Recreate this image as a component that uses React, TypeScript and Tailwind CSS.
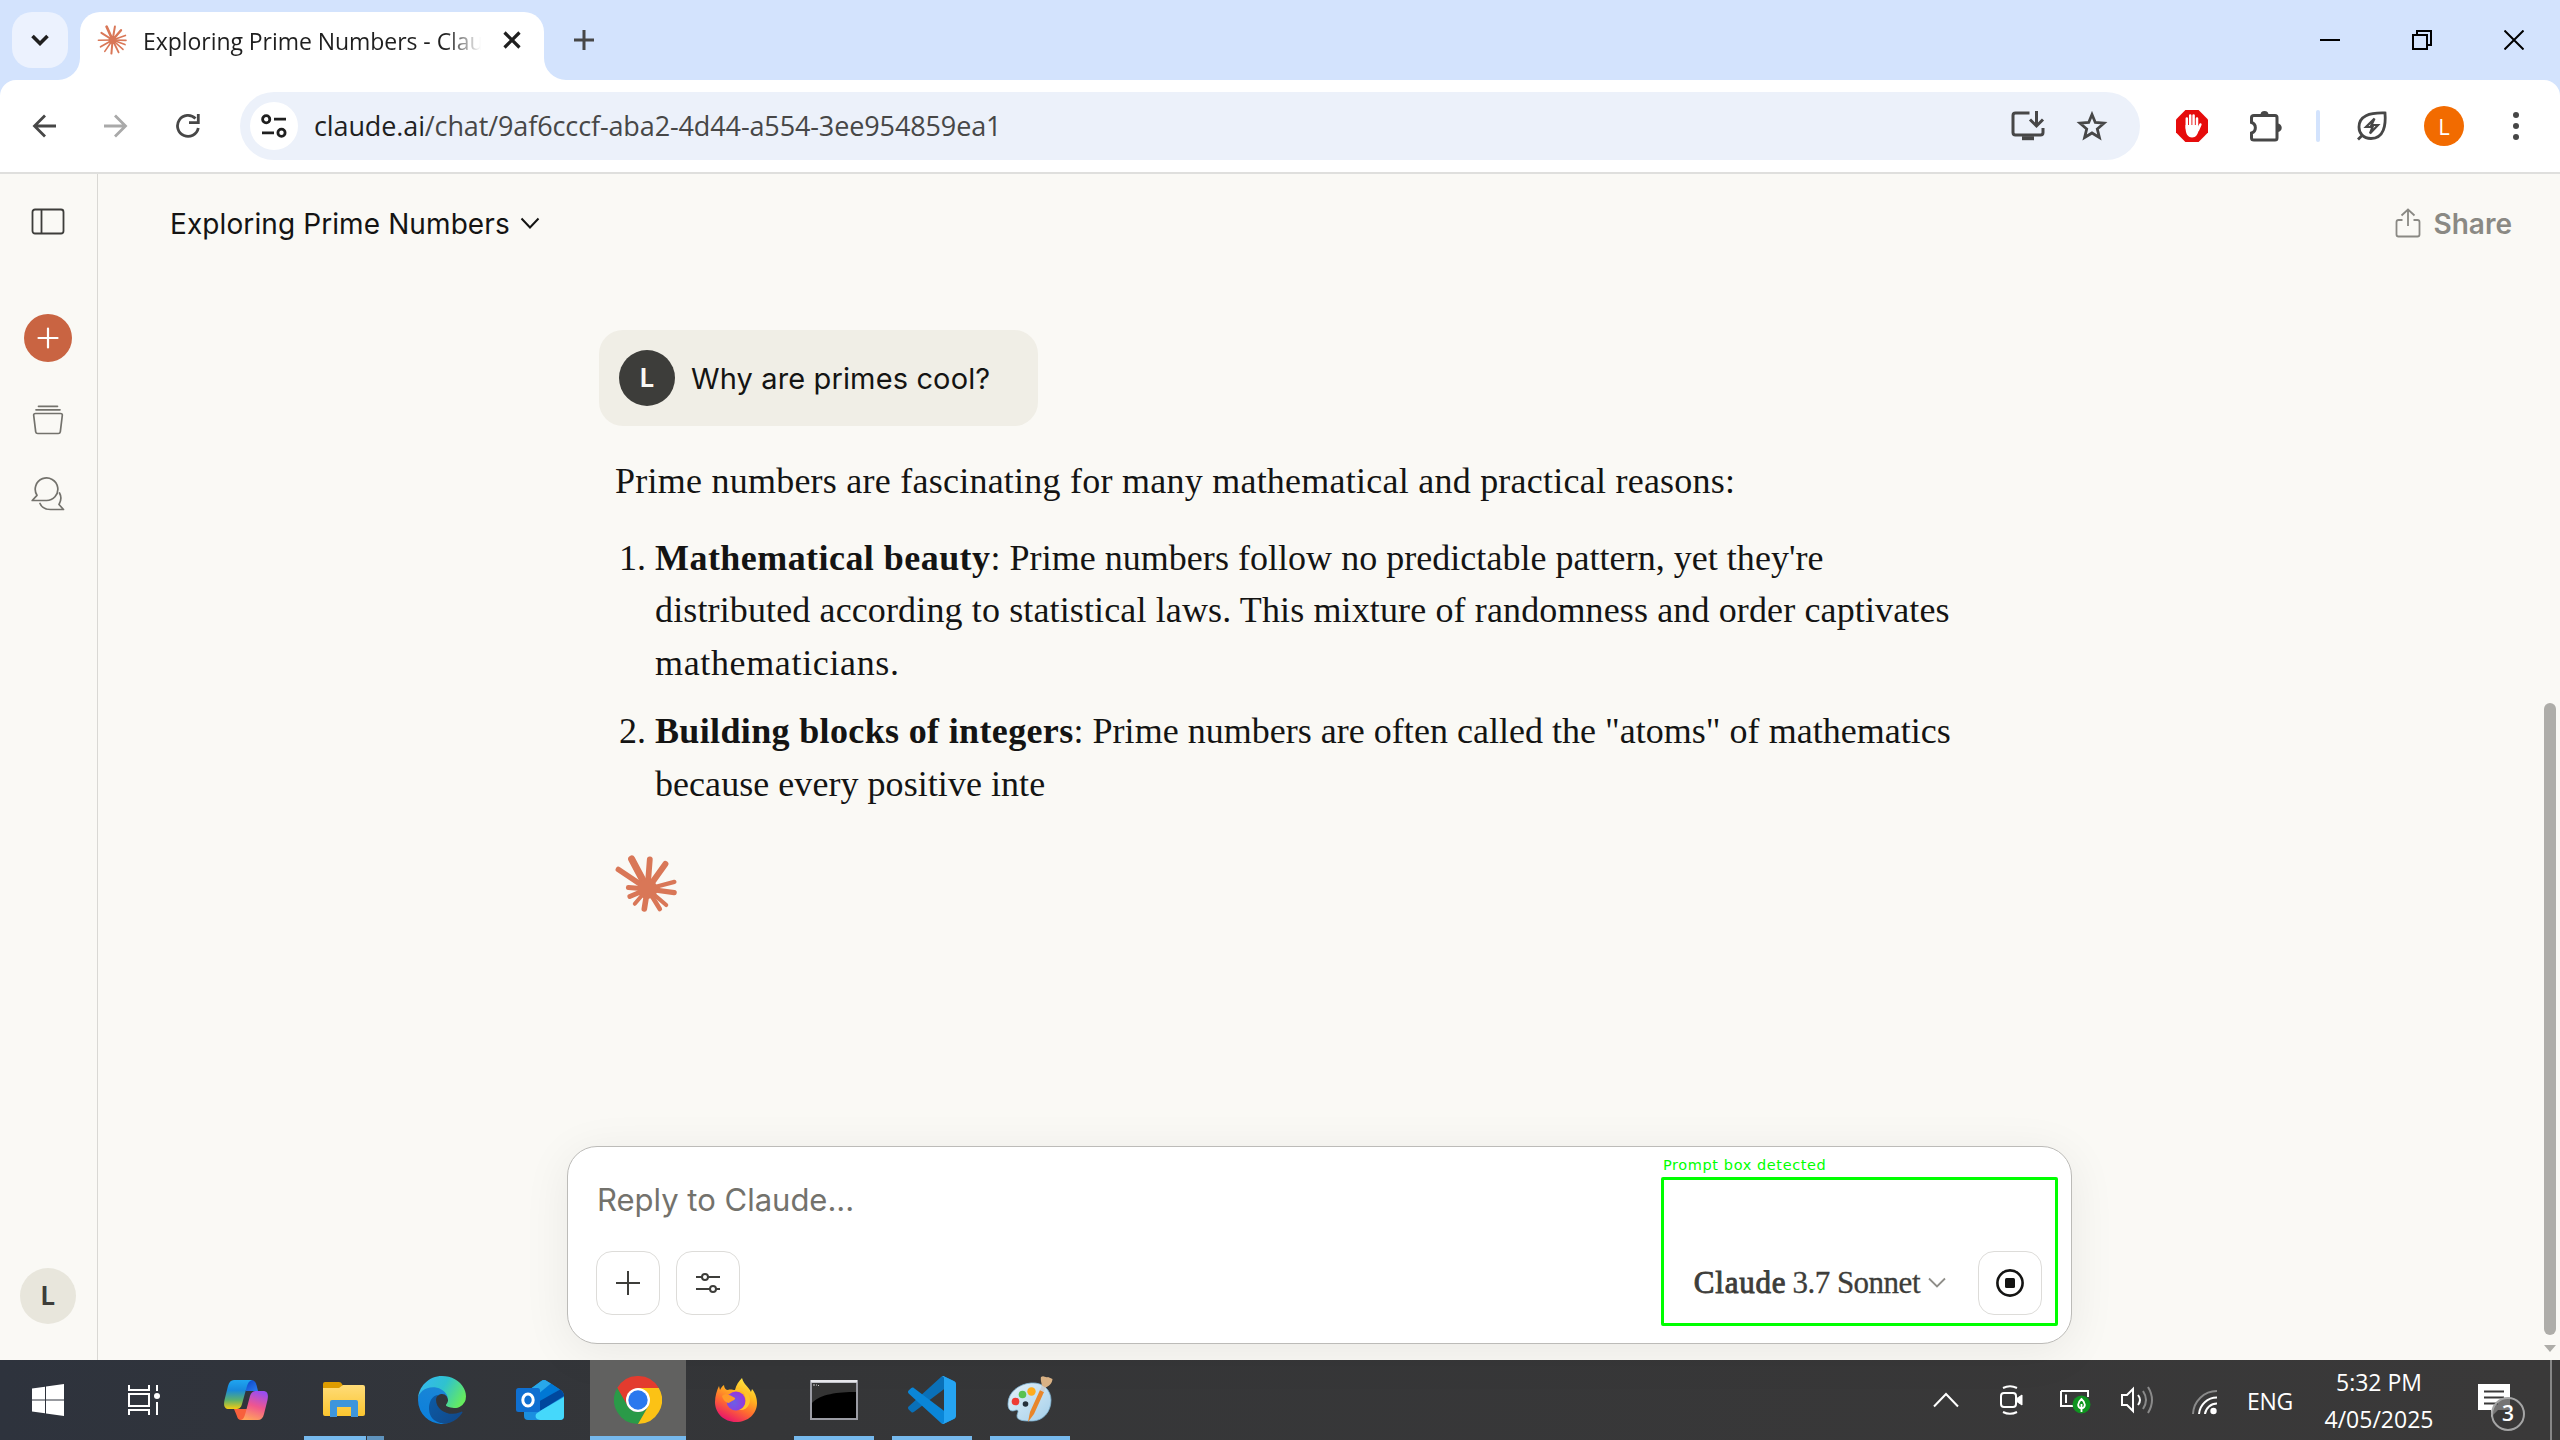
import type { ReactNode } from "react";

type Ray = [number, number, number];

function Burst({ w, h, cx, cy, core, rays }: { w: number; h: number; cx: number; cy: number; core: number; rays: Ray[] }) {
  return (
    <svg width={w} height={h} viewBox={`0 0 ${w} ${h}`} className="shrink-0" fill="#d97757" stroke="#d97757" strokeLinecap="round">
      {rays.map(([x, y, t], i) => (
        <line key={i} x1={cx} y1={cy} x2={x} y2={y} strokeWidth={t} />
      ))}
      <circle cx={cx} cy={cy} r={core} stroke="none" />
    </svg>
  );
}

const FAVICON_RAYS: Ray[] = [
  [9.6, 1.6, 2.6], [17.9, 1.6, 2], [24, 5.2, 2.4], [28.4, 10.4, 1.6], [29, 15.4, 1.6], [28, 19.6, 1.6], [26, 24.4, 1.6],
  [21.6, 27.4, 1.8], [14.4, 28.6, 2], [7.8, 26.4, 1.6], [3.6, 21.8, 1.8], [1.4, 15.2, 1.6], [4.4, 7.8, 2],
];

const LOGO_RAYS: Ray[] = [
  [3.4, 14.5, 5.6], [16.6, 4, 7], [34.8, 4.4, 5.8], [50.4, 9, 6], [59.4, 26.9, 4.2], [59.2, 37.6, 5.2], [51.2, 50, 4.2],
  [44.8, 54, 4.6], [29.3, 54, 5.6], [19.8, 48.8, 4], [14.8, 41.5, 4.8], [13.4, 32.4, 5],
];

function Stroke({ w, h, color, sw = 2, children, cap = "butt", className = "" }: { w: number; h: number; color: string; sw?: number; children: ReactNode; cap?: "butt" | "round"; className?: string }) {
  return (
    <svg width={w} height={h} viewBox={`0 0 ${w} ${h}`} className={`shrink-0 ${className}`} fill="none" stroke={color} strokeWidth={sw} strokeLinecap={cap} strokeLinejoin={cap === "round" ? "round" : "miter"}>
      {children}
    </svg>
  );
}

function TabStrip() {
  return (
    <div className="flex h-20 bg-[#d3e3fd]">
      <div className="mt-3 ml-3 flex size-14 items-center justify-center rounded-[20px] bg-[#ecf2fe]">
        <Stroke w={18} h={12} color="#1f1f1f" sw={3.6}><path d="M1.5 2 L9 9.5 L16.5 2" /></Stroke>
      </div>
      <div className="relative mt-3 ml-3 flex h-[68px] w-[464px] items-start rounded-t-[20px] bg-white">
        <svg width="22" height="22" className="absolute bottom-0 -left-[22px]"><path d="M22 0 V22 H0 A22 22 0 0 0 22 0Z" fill="#fff" /></svg>
        <svg width="22" height="22" className="absolute -right-[22px] bottom-0"><path d="M0 0 V22 H22 A22 22 0 0 1 0 0Z" fill="#fff" /></svg>
        <div className="mt-[13px] ml-[17px]"><Burst w={30} h={30} cx={15.6} cy={15} core={4} rays={FAVICON_RAYS} /></div>
        <div className="mt-[9px] ml-[16px] w-[338px] mask-r-from-[302px] mask-r-to-[338px]">
          <span className="font-['Open_Sans'] text-[23px] leading-[40px] tracking-[-0.05px] whitespace-nowrap text-[#1f1f1f]">Exploring Prime Numbers - Clau</span>
        </div>
        <Stroke w={18} h={18} color="#1f1f1f" sw={3.2} className="mt-[19px] ml-[22px]"><path d="M1.5 1.5 L16.5 16.5 M16.5 1.5 L1.5 16.5" /></Stroke>
      </div>
      <Stroke w={22} h={22} color="#474747" sw={3} className="mt-[29px] ml-[29px]"><path d="M11 1 V21 M1 11 H21" /></Stroke>
      <div className="mr-9 ml-auto flex items-center gap-[72px]">
        <Stroke w={20} h={20} color="#000"><path d="M0 10 H20" /></Stroke>
        <Stroke w={20} h={20} color="#000"><path d="M1 5 H15 V19 H1Z M5 5 V1 H19 V15 H15" /></Stroke>
        <Stroke w={20} h={20} color="#000"><path d="M0.5 0.5 L19.5 19.5 M19.5 0.5 L0.5 19.5" /></Stroke>
      </div>
    </div>
  );
}

function Toolbar() {
  return (
    <div className="bg-[#d3e3fd]">
      <div className="flex h-[94px] items-start rounded-t-[16px] border-b-2 border-[#dfdfdd] bg-white">
        <div className="flex h-[92px] flex-1 items-center">
          <Stroke w={24} h={24} color="#474747" sw={2.8} className="ml-8"><path d="M24 12 H3 M13 1.5 L2.5 12 L13 22.5" /></Stroke>
          <Stroke w={24} h={24} color="#a9a9a9" sw={2.8} className="ml-12"><path d="M0 12 H21 M11 1.5 L21.5 12 L11 22.5" /></Stroke>
          <Stroke w={26} h={26} color="#474747" sw={2.8} className="ml-[47px]"><path d="M23.3 15 A10.5 10.5 0 1 1 20.5 5.5 M23.3 1 V9.6 H14" /></Stroke>
          <div className="ml-[39px] flex h-[68px] w-[1900px] items-center rounded-full bg-[#ecf1fa]">
            <div className="ml-[10px] flex size-12 items-center justify-center rounded-full bg-white">
              <Stroke w={26} h={24} color="#1f1f1f" sw={2.8}><circle cx="5.2" cy="5.2" r="3.6" /><path d="M13 5.2 H25 M1 18.8 H13" /><circle cx="20.5" cy="18.8" r="3.6" /></Stroke>
            </div>
            <span className="ml-4 font-['Open_Sans'] text-[27px] leading-[40px] tracking-[-0.12px] whitespace-nowrap text-[#474747]"><span className="text-[#1f1f1f]">claude.ai</span>/chat/9af6cccf-aba2-4d44-a554-3ee954859ea1</span>
            <Stroke w={34} h={30} color="#474747" sw={3} className="mr-[31px] ml-auto"><path d="M18.500 2 H4.500 Q2 2 2 4.500 V21.500 Q2 24 4.500 24 H29.500 Q32 24 32 21.500 V17" /><path d="M25.500 0 V14 M19 8.500 L25.500 15 L32 8.500" /><path d="M11 27.200 H23" strokeWidth="4" /></Stroke>
            <Stroke w={32} h={30} color="#474747" sw={2.8} className="mr-8"><path d="M16 3.500 L19.300 11.500 L28 12.200 L21.300 18 L23.400 26.500 L16 22 L8.600 26.500 L10.700 18 L4 12.200 L12.700 11.500Z" /></Stroke>
          </div>
          <svg width="32" height="32" viewBox="0 0 32 32" className="ml-9 shrink-0">
            <path d="M9.400 0 H22.600 L32 9.400 V22.600 L22.600 32 H9.400 L0 22.600 V9.400Z" fill="#e60c0c" />
            <g stroke="#fff" strokeWidth="2.500" strokeLinecap="round" fill="none"><path d="M10.800 18 V8.500 M14.200 16 V5.500 M17.600 16 V5.500 M21 17 V8.500" /><path d="M22 20 L24.400 14.500" /></g>
            <path d="M9.550 15 H22.200 L23 19 C22 24 20 27.500 16 27.500 C11.500 27.500 9.550 23 9.550 18Z" fill="#fff" />
          </svg>
          <Stroke w={34} h={34} color="#474747" sw={3} className="ml-[41px]"><path d="M5 6.500 H26 Q28 6.500 28 8.500 V29 Q28 31 26 31 H5 Q2.500 31 2.500 29 V24 A5.500 5.500 0 0 0 2.500 13.500 V8.500 Q2.500 6.500 5 6.500Z" /><path d="M11.500 6 A4 4 0 0 1 19.500 6Z M28.500 14.500 A4 4 0 0 1 28.500 23Z" fill="#474747" stroke="none" /></Stroke>
          <div className="ml-[33px] h-8 w-1 rounded-full bg-[#d3e3fd]" />
          <Stroke w={32} h={32} color="#474747" sw={2.800} className="ml-[36px]"><path d="M29 3 C30 15 28 28.500 15 28.500 C7 28.500 3 23 3 17 C3 6 13 2.500 29 3Z M2 29.500 L7 24.500" /><path d="M18.500 8.500 L10 17 H16.500 L14 23.500 L22 15 H15.500Z" strokeWidth="2.200" /></Stroke>
          <div className="ml-[36px] flex size-10 items-center justify-center rounded-full bg-[#f26b00] font-['Open_Sans'] text-[22px] text-white">L</div>
          <svg width="6" height="30" className="ml-[49px] shrink-0" fill="#474747"><circle cx="3" cy="4" r="3" /><circle cx="3" cy="15" r="3" /><circle cx="3" cy="26" r="3" /></svg>
        </div>
      </div>
    </div>
  );
}

function Sidebar() {
  return (
    <div className="flex w-[98px] shrink-0 flex-col items-center border-r border-[#d9d8d4] pr-[1px]">
      <Stroke w={34} h={27} color="#3d3d3a" sw={1.800} className="mt-[34px]"><rect x="1.500" y="1.500" width="31" height="24" rx="2.500" /><path d="M10.500 1.500 V25.500" /></Stroke>
      <div className="mt-[79px] flex size-12 items-center justify-center rounded-full bg-[#c96442]">
        <Stroke w={22} h={22} color="#fff" sw={2.200} cap="round"><path d="M11 1.500 V20.500 M1.500 11 H20.500" /></Stroke>
      </div>
      <Stroke w={32} h={32} color="#73726c" sw={1.700} cap="round" className="mt-[42px]"><path d="M6.500 2.300 H25.500 M4 5.800 H28" /><path d="M3.500 9.500 H28.500 Q30.600 9.500 30.300 11.500 L28.300 27.800 Q28 29.500 26.300 29.500 H5.700 Q4 29.500 3.700 27.800 L1.700 11.500 Q1.400 9.500 3.500 9.500Z" /></Stroke>
      <Stroke w={34} h={36} color="#73726c" sw={1.700} cap="round" className="mt-[40px]"><path d="M1.200 24.500 L6 19.300 A11.300 11.300 0 1 1 15 24.500Z" /><path d="M28.500 17 C30.500 20.500 30 25 28 28.500 L32.500 33.500 H19.500 C14.500 33.500 10.500 31 9 27.500" /></Stroke>
      <div className="mt-auto mb-9 flex size-14 items-center justify-center rounded-full bg-[#e8e6dc] pt-[2px] font-['Inter'] text-[25px] font-bold text-[#3d3d3a]">L</div>
    </div>
  );
}

function Composer() {
  return (
    <div className="relative mb-4 flex h-[198px] w-[1505px] flex-col rounded-[30px] border border-[#bcbbb8] bg-white pr-[29px] pl-7 shadow-[0_8px_48px_rgba(0,0,0,0.07)]">
      <span className="mt-[29px] ml-[1px] font-['Inter'] text-[31px] leading-[48px] text-[#73726c]">Reply to Claude...</span>
      <div className="mt-[27px] flex items-center">
        <div className="flex size-16 items-center justify-center rounded-2xl border-[1.500px] border-[#dddcd9]">
          <Stroke w={24} h={24} color="#3d3d3a"><path d="M12 0 V24 M0 12 H24" /></Stroke>
        </div>
        <div className="ml-4 flex size-16 items-center justify-center rounded-2xl border-[1.500px] border-[#dddcd9]">
          <Stroke w={24} h={20} color="#3d3d3a"><path d="M0 4 H6 M12 4 H24 M0 16 H14 M20 16 H24" /><circle cx="9" cy="4" r="3" /><circle cx="17" cy="16" r="3" /></Stroke>
        </div>
        <div className="mr-8 ml-auto flex items-center font-['Liberation_Serif'] text-[31px] leading-[40px] text-[#3d3d3a]">
          <span className="tracking-[0.8px] [-webkit-text-stroke:0.9px_#3d3d3a]">Claude</span>
          <span className="ml-[6px] tracking-[-0.5px] [-webkit-text-stroke:0.300px_#3d3d3a]">3.7 Sonnet</span>
          <Stroke w={18} h={12} color="#8f8e89" sw={1.800} className="ml-2"><path d="M1 1.500 L9 9.500 L17 1.500" /></Stroke>
        </div>
        <div className="flex size-16 items-center justify-center rounded-2xl border-[1.500px] border-[#dddcd9]">
          <svg width="28" height="28"><circle cx="14" cy="14" r="12.600" fill="none" stroke="#141413" strokeWidth="2.600" /><rect x="9" y="9" width="10" height="10" rx="1.500" fill="#141413" /></svg>
        </div>
      </div>
      <div className="absolute top-[7px] left-[1093px] flex flex-col">
        <span className="ml-[2px] self-start font-['DejaVu_Sans'] text-[14.500px] leading-[23px] font-normal tracking-[0.600px] text-[#00ff00]">Prompt box detected</span>
        <div className="h-[149px] w-[397px] rounded-[2px] border-3 border-[#00ff00]" />
      </div>
    </div>
  );
}

function ChatPage() {
  return (
    <div className="flex h-[1186px] bg-[#faf9f5]">
      <Sidebar />
      <div className="flex flex-1 flex-col">
        <div className="flex h-[98px] items-center pt-[2px] pr-8 pl-[72px] font-['Inter'] text-[28px] leading-[40px]">
          <span className="tracking-[0.1px] text-[#141413]">Exploring Prime Numbers</span>
          <Stroke w={20} h={14} color="#141413" className="ml-[10px]"><path d="M1.500 1.500 L10 10.500 L18.500 1.500" /></Stroke>
          <Stroke w={26} h={30} color="#8a8984" sw={1.800} className="mb-[2px] ml-auto"><path d="M7.500 12 H3.500 Q1.500 12 1.500 14 V26.500 Q1.500 28.500 3.500 28.500 H22.500 Q24.500 28.500 24.500 26.500 V14 Q24.500 12 22.500 12 H18.500 M13 18 V2 M6.500 7.500 L13 1.500 L19.500 7.500" /></Stroke>
          <span className="ml-[13px] font-semibold text-[#8a8984]">Share</span>
        </div>
        <div className="flex flex-1 flex-col pl-[501px]">
          <div className="mt-[58px] flex h-24 w-[439px] items-center rounded-[24px] bg-[#f0eee6]">
            <div className="ml-5 flex size-14 items-center justify-center rounded-full bg-[#3d3d3a] pt-[2px] font-['Inter'] text-[25px] font-bold text-[#faf9f5]">L</div>
            <span className="mt-[2px] ml-[16px] font-['Inter'] text-[29px] leading-[40px] tracking-[0.130px] text-[#141413]">Why are primes cool?</span>
          </div>
          <div className="pl-[16px] font-['Liberation_Serif'] text-[36px] leading-[52.500px] whitespace-nowrap text-[#141413]">
            <p className="mt-[29px]"><span className="tracking-[0.240px]">Prime numbers are fascinating for many mathematical and practical reasons:</span></p>
            <div className="mt-[24px] flex">
              <span className="ml-[4px] w-[36px]">1.</span>
              <p>
                <span className="font-bold tracking-[0.450px]">Mathematical beauty</span><span className="tracking-[0.030px]">: Prime numbers follow no predictable pattern, yet they're</span><br />
                <span className="tracking-[0.130px]">distributed according to statistical laws. This mixture of randomness and order captivates</span><br />
                <span className="tracking-[0.650px]">mathematicians.</span>
              </p>
            </div>
            <div className="mt-[16px] flex">
              <span className="ml-[4px] w-[36px]">2.</span>
              <p>
                <span className="font-bold tracking-[0.350px]">Building blocks of integers</span><span className="tracking-[0.020px]">: Prime numbers are often called the "atoms" of mathematics</span><br />
                <span className="tracking-[0.050px]">because every positive inte</span>
              </p>
            </div>
          </div>
          <div className="mt-[45px] ml-4"><Burst w={64} h={58} cx={32.500} cy={34} core={10} rays={LOGO_RAYS} /></div>
        </div>
        <div className="pl-[469px]"><Composer /></div>
      </div>
      <div className="flex w-4 shrink-0 flex-col items-start">
        <div className="mt-[529px] h-[632px] w-3 rounded-full bg-[#aeada9]" />
        <svg width="12" height="8" className="mt-[10px]"><path d="M0 0 H12 L6 7Z" fill="#aeada9" /></svg>
      </div>
    </div>
  );
}

function WindowsIcon() {
  return <svg width="32" height="32" fill="#fff"><path d="M0 4.600 L13 2.700 V15.500 H0Z M14 2.500 L32 0 V15.500 H14Z M0 16.500 H13 V29.300 L0 27.400Z M14 16.500 H32 V32 L14 29.500Z" /></svg>;
}

function TaskViewIcon() {
  return <Stroke w={32} h={30} color="#fff"><path d="M1 0 V5 H21 V0 M1 30 V25 H21 V30 M1 9 H21 V21 H1Z M29 0 V6 M29 17 V30" /><circle cx="29" cy="11" r="3" fill="#fff" stroke="none" /></Stroke>;
}

function CopilotIcon() {
  return (
    <svg width="44" height="40" viewBox="0 0 44 40">
      <defs>
        <linearGradient id="cpA" x1="0" y1="0" x2="0" y2="1"><stop offset="0" stopColor="#1fa5f0" /><stop offset=".35" stopColor="#1889dc" /><stop offset=".7" stopColor="#5fb16a" /><stop offset="1" stopColor="#f5cb10" /></linearGradient>
        <linearGradient id="cpB" x1=".6" y1="0" x2=".3" y2="1"><stop offset="0" stopColor="#9a4df0" /><stop offset=".5" stopColor="#f0568e" /><stop offset="1" stopColor="#ffa35c" /></linearGradient>
        <linearGradient id="cpC" x1="0" y1="0" x2="1" y2="1"><stop offset="0" stopColor="#0a3fc4" /><stop offset="1" stopColor="#2b7df0" /></linearGradient>
      </defs>
      <path d="M20 0 H27 C31 0 32 3 33 7 L34 11 H22Z" fill="url(#cpC)" />
      <path d="M10 29 H24 L21 40 H18 C14 40 13.500 38 12.500 35Z" fill="#f8603c" />
      <path d="M10 0 H28 C25 1 24 3 23 6 L18 24 C17 28 15 29 12 29 H5 C0 29 -.5 25 .5 20 L4 6 C5 2 7 0 10 0Z" fill="url(#cpA)" />
      <path d="M34 40 H17 C20 39 20.500 36 21.500 33 L26 16 C27 12.500 29 11 32 11 H39 C44 11 44.500 15 43.500 20 L40 34 C39 38 37 40 34 40Z" fill="url(#cpB)" />
    </svg>
  );
}

function FolderIcon() {
  return (
    <svg width="42" height="36" viewBox="0 0 42 36">
      <defs><linearGradient id="fo" x1="0" y1="0" x2="0" y2="1"><stop offset="0" stopColor="#ffdc78" /><stop offset="1" stopColor="#fbc52f" /></linearGradient></defs>
      <path d="M0 2 Q0 0 2 0 H16 Q18 0 19 2 L21 6 H0Z" fill="#dd9c00" />
      <path d="M0 6 H16 L20 3 H40 Q42 3 42 5 V32 Q42 34 40 34 H2 Q0 34 0 32Z" fill="url(#fo)" />
      <path d="M7 35 V20 Q7 18 9 18 H33 Q35 18 35 20 V35 H28 V25 H14 V35Z" fill="#3d95dc" />
    </svg>
  );
}

function EdgeIcon() {
  return (
    <svg width="48" height="48" viewBox="0 0 256 256">
      <defs>
        <linearGradient id="e1" x1=".2" y1="0" x2="1" y2=".6"><stop offset="0" stopColor="#0c59a4" /><stop offset="1" stopColor="#114a8b" /></linearGradient>
        <linearGradient id="e2" x1=".6" y1="0" x2=".3" y2="1"><stop offset="0" stopColor="#1b86d6" /><stop offset="1" stopColor="#0a7fdc" /></linearGradient>
        <linearGradient id="e3" x1="0" y1=".2" x2="1" y2=".6"><stop offset="0" stopColor="#35b8f1" /><stop offset=".5" stopColor="#2fc2cf" /><stop offset="1" stopColor="#66eb5e" /></linearGradient>
      </defs>
      <path fill="url(#e2)" d="M105.700 241.400a79.200 79.200 0 0 1-22.700-21.300 80.700 80.700 0 0 1 29.500-120c3.200-1.500 8.500-4.100 15.600-4a32.400 32.400 0 0 1 25.700 13 31.900 31.900 0 0 1 6.300 18.700c0-.2 24.500-79.600-80-79.600-43.900 0-80 41.700-80 78.200a130.200 130.200 0 0 0 12.100 56 128 128 0 0 0 156.400 67 75.500 75.500 0 0 1-62.800-8z" />
      <path fill="url(#e1)" d="M231 190.500c-3.400 1.800-6.900 3.400-10.500 4.700a101.700 101.700 0 0 1-35.900 6.500c-47.300 0-88.500-32.500-88.500-74.300a31.500 31.500 0 0 1 16.400-27.300c-42.800 1.800-53.800 46.400-53.800 72.500 0 73.900 68.100 81.400 82.800 81.400 7.900 0 19.800-2.300 27-4.600l1.300-.4a128.300 128.300 0 0 0 66.600-52.800 4 4 0 0 0-5.400-5.700z" />
      <path fill="url(#e3)" d="M152.300 148.900c-.9 1-3.400 2.500-3.400 5.600 0 2.600 1.700 5.200 4.800 7.300 14.300 10 41.400 8.600 41.500 8.600 10.700 0 21.100-2.900 30.300-8.300a61.400 61.400 0 0 0 30.400-52.900c.3-22.400-8-37.300-11.300-43.900C223.500 23.900 177.700 0 128 0 58 0 1 56.200 0 126.200c.5-36.500 36.800-66 80-66 3.500 0 23.500.3 42 10.100 16.300 8.600 24.900 18.900 30.800 29.200 6.200 10.700 7.300 24.100 7.300 29.500s-2.700 13.300-7.800 19.900z" />
    </svg>
  );
}

function OutlookIcon() {
  return (
    <svg width="48" height="40" viewBox="0 0 48 40">
      <path d="M8 14 L25 1.200 Q28 -1 31 1.200 L46 11 Q48 13 48 16 V36 Q48 40 44 40 H12 Q8 40 8 36Z" fill="#1a8fe0" />
      <path d="M10 12 L25 1.200 Q28 -1 31 1.200 L35 3.500 L22 14Z" fill="#28a8ea" />
      <path d="M20 16 L35 3.500 L44 9.500 L22 24Z" fill="#0078d4" />
      <path d="M22 22 L44 9.500 Q48 12 48 16 L24 31Z" fill="#00489e" />
      <path d="M24 31 L48 17 V36 Q48 40 44 40 H24 Q18 39 20 34Z" fill="#45d8fb" />
      <rect x="0" y="8" width="24" height="24" rx="2.500" fill="#0f6fd0" />
      <ellipse cx="12" cy="20" rx="5.200" ry="6" fill="none" stroke="#fff" strokeWidth="3" />
    </svg>
  );
}

function ChromeIcon() {
  return (
    <svg width="48" height="48" viewBox="0 0 48 48">
      <path d="M3.210 12 A24 24 0 0 1 44.790 12 H24 L13.600 30Z" fill="#e33b2e" />
      <path d="M3.210 12 L13.600 30 A12 12 0 0 0 34.400 30 L24 48 A24 24 0 0 1 3.210 12Z" fill="#2a9a48" />
      <path d="M44.790 12 A24 24 0 0 1 24 48 L34.400 30 L24 12Z" fill="#fcc215" />
      <circle cx="24" cy="24" r="12" fill="#fff" />
      <circle cx="24" cy="24" r="9.700" fill="#2a78ee" />
    </svg>
  );
}

function FirefoxIcon() {
  return (
    <svg width="44" height="46" viewBox="0 0 44 46">
      <defs>
        <linearGradient id="f1" x1=".8" y1="0" x2=".3" y2="1"><stop offset="0" stopColor="#fff04a" /><stop offset=".35" stopColor="#ffb71e" /><stop offset=".65" stopColor="#ff6b30" /><stop offset="1" stopColor="#e8106e" /></linearGradient>
        <radialGradient id="f2" cx=".4" cy=".6" r=".6"><stop offset="0" stopColor="#6a5fe6" /><stop offset="1" stopColor="#9637dc" /></radialGradient>
      </defs>
      <path d="M28 1 C30 8 35 10 37 15 L38 12 C42 17 43 22 43 26 C43 37 34 45 22 45 C10 45 1 36 1 25 C1 19 3 13 5 9 L6 13 C7 11 8 9 10 8 C10 11 12 13 14 13 C16 12 19 13 21 13 C22 8 25 4 28 1Z" fill="url(#f1)" />
      <circle cx="22" cy="24" r="9.500" fill="url(#f2)" />
      <path d="M8 19 C12 15 17 19 21 21 C22 23 17 24 15 26 C12 26 9 23 8 19Z" fill="#ff9a28" />
      <path d="M20 14 C25 12 31 14 31 19 C33 24 31 31 25 33 C34 34 38 25 35 18 C32 12 25 9 20 14Z" fill="#ffc32c" />
    </svg>
  );
}

function TerminalIcon() {
  return (
    <svg width="48" height="40" viewBox="0 0 48 40">
      <rect x="0" y="0" width="48" height="40" fill="#9b9ca4" /><rect x="1" y="0" width="46" height="2.500" fill="#e8e8ec" />
      <rect x="2" y="3" width="44" height="35" fill="#000" />
      <path d="M2 3 H46 V12 C28 12 10 14 2 23Z" fill="#343434" />
      <path d="M3 5 H5 M6 5 H7 M8 5.500 H9" stroke="#ccc" fill="none" />
    </svg>
  );
}

function CodeIcon() {
  return (
    <svg width="48" height="48" viewBox="0 0 100 100">
      <path fill="#0a70b8" d="M96.460 10.800L75.860 .88C73.470-.27 70.620 .21 68.750 2.080L1.300 63.580C-.52 65.240-.51 68.090 1.300 69.750L6.810 74.750C8.300 76.100 10.530 76.200 12.130 74.990L93.360 13.370C96.090 11.300 100 13.250 100 16.670Z" />
      <path fill="#0a86d8" d="M96.460 89.200L75.860 99.120C73.470 100.270 70.620 99.790 68.750 97.920L1.300 36.420C-.52 34.760-.51 31.910 1.300 30.250L6.810 25.250C8.300 23.900 10.530 23.800 12.130 25.010L93.360 86.630C96.090 88.700 100 86.750 100 83.330Z" />
      <path fill="#25a4f2" d="M75.860 99.130C73.470 100.270 70.620 99.790 68.750 97.920C71.060 100.220 75 98.590 75 95.330V4.670C75 1.410 71.060-.22 68.750 2.080C70.620 .21 73.470-.27 75.860 .87L96.460 10.780C98.620 11.820 100 14.010 100 16.410V83.590C100 85.990 98.620 88.180 96.460 89.220Z" />
    </svg>
  );
}

function PaintIcon() {
  return (
    <svg width="46" height="48" viewBox="0 0 46 48">
      <defs><linearGradient id="pa" x1="0" y1="0" x2="1" y2="1"><stop offset="0" stopColor="#e4f2fa" /><stop offset="1" stopColor="#a4cfea" /></linearGradient></defs>
      <path d="M24 7 C36 6 44 14 44 24 C44 36 36 45 25 45 C18 45 10 45 10 40 C10 37 13 34 9 34 C5 36 1 35 1 28 C1 16 12 8 24 7Z" fill="url(#pa)" stroke="#7fb2d2" strokeWidth=".8" />
      <circle cx="18.500" cy="28" r="2.800" fill="#24313c" />
      <circle cx="8.500" cy="25.500" r="3.800" fill="#ee3b33" /><circle cx="15.500" cy="18.500" r="3.800" fill="#59c251" /><circle cx="24.500" cy="15.500" r="4.200" fill="#ffac1c" />
      <path d="M21 46 L23 36 L33 14 L37 16 L27 38Z" fill="#e8862a" /><path d="M33 14 L35 9 L39 11 L37 16Z" fill="#c9cfd4" />
      <path d="M34 1 C37 -1 38 2 41 1 L45.500 3 C45 8 42 10 38.500 11.500 L35 9.500 C34 6 33.500 3 34 1Z" fill="#d9b184" />
    </svg>
  );
}

function TaskItem({ children, active, bar }: { children: ReactNode; active?: boolean; bar?: "one" | "multi" | "full" }) {
  return (
    <div className={active ? "relative flex h-20 w-24 items-center justify-center bg-[#616160]" : "relative flex h-20 w-24 items-center justify-center"}>
      {children}
      {bar === "one" && <div className="absolute bottom-0 left-2 h-1 w-20 bg-[#76b9ed]" />}
      {bar === "full" && <div className="absolute bottom-0 left-0 h-1 w-24 bg-[#76b9ed]" />}
      {bar === "multi" && <div className="absolute bottom-0 left-2 flex h-1 w-20"><div className="w-[62px] bg-[#76b9ed]" /><div className="ml-px flex-1 bg-[#5f93bd]" /></div>}
    </div>
  );
}

function Taskbar() {
  return (
    <div className="flex h-20 bg-linear-to-r from-[#2e333d] via-[#353638] via-30% to-[#3a3939] text-white">
      <div className="flex items-center">
        <div className="flex w-24 justify-center"><WindowsIcon /></div>
        <div className="flex w-24 justify-center"><TaskViewIcon /></div>
      </div>
      <div className="ml-[6px] flex gap-[2px]">
        <TaskItem><CopilotIcon /></TaskItem>
        <TaskItem bar="multi"><FolderIcon /></TaskItem>
        <TaskItem><EdgeIcon /></TaskItem>
        <TaskItem><OutlookIcon /></TaskItem>
        <TaskItem active bar="full"><ChromeIcon /></TaskItem>
        <TaskItem><FirefoxIcon /></TaskItem>
        <TaskItem bar="one"><TerminalIcon /></TaskItem>
        <TaskItem bar="one"><CodeIcon /></TaskItem>
        <TaskItem bar="one"><PaintIcon /></TaskItem>
      </div>
      <div className="ml-auto flex items-center font-['Open_Sans'] text-[23px] whitespace-nowrap">
        <Stroke w={26} h={16} color="#fff"><path d="M1 14.500 L13 2 L25 14.500" /></Stroke>
        <Stroke w={24} h={30} color="#fff" className="ml-[41px]"><rect x="1" y="8" width="15" height="14" rx="3" /><path d="M16 14 L22 10 V20 L16 16Z" fill="#fff" strokeWidth="1" /><path d="M3 3 Q10 -.5 17 3 M3 27 Q10 30.500 17 27" /></Stroke>
        <Stroke w={32} h={26} color="#fff" className="mt-1 ml-[36px]"><path d="M1 2 H28 V8 M1 2 V17 H14 M6 5.500 V14" /><circle cx="21.500" cy="15.500" r="9" fill="#0f9420" stroke="none" /><path d="M21.500 10 C26 14 26 18 21.500 20 C17 18 17 14 21.500 10Z M21.500 15 V23" strokeWidth="1.800" /></Stroke>
        <Stroke w={34} h={30} color="#fff" className="ml-[29px]"><path d="M1 10 H6 L12 4 V26 L6 20 H1Z" /><path d="M17 10 Q21 15 17 20" /><path d="M22 6 Q28 15 22 24 M27 2 Q35 15 27 28" stroke="#8a8a8a" /></Stroke>
        <Stroke w={26} h={26} color="#fff" className="mt-1 ml-[37px]"><path d="M1 25 A24 24 0 0 1 25 2" stroke="#8a8a8a" /><path d="M7 25 A18 18 0 0 1 25 8.500 M13 25 A12 12 0 0 1 25 14.500" /><circle cx="21.500" cy="22" r="3.200" fill="#fff" stroke="none" /></Stroke>
        <span className="mt-[2px] ml-[29px] tracking-[-0.300px]">ENG</span>
        <div className="ml-[32px] flex w-[108px] flex-col items-center leading-[37px]"><span className="mt-[1px]">5:32 PM</span><span>4/05/2025</span></div>
        <div className="relative ml-[45px] h-[30px] w-8 self-start">
          <svg width="32" height="40" className="mt-6"><path d="M0 0 H32 V26 H20 L13 33 V26 H0Z" fill="#fff" /><path d="M6 7.500 H26 M6 13.500 H26 M6 19.500 H20" stroke="#3a3939" strokeWidth="2" /></svg>
          <div className="absolute top-[37px] left-[13px] flex size-[34px] items-center justify-center rounded-full border-2 border-[#a5a5a5] bg-[#3a3939]/70 text-[21px] font-semibold">3</div>
        </div>
        <div className="mr-2 ml-[40px] h-20 w-[2px] bg-[#868686]" />
      </div>
    </div>
  );
}

export default function App() {
  return (
    <div className="flex h-[1440px] w-[2560px] flex-col overflow-hidden">
      <TabStrip />
      <Toolbar />
      <ChatPage />
      <Taskbar />
    </div>
  );
}
